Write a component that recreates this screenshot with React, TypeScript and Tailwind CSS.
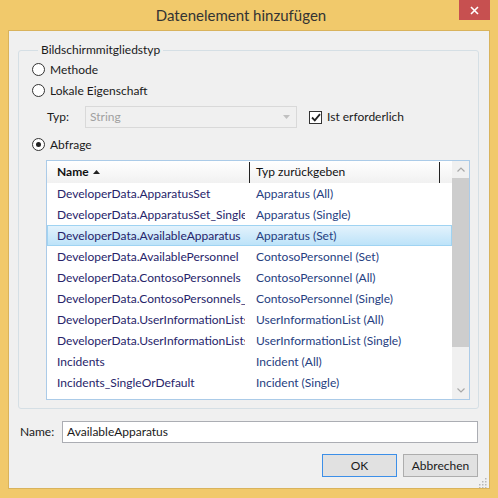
const rows = [
  ["DeveloperData.ApparatusSet", "Apparatus (All)"],
  ["DeveloperData.ApparatusSet_Single", "Apparatus (Single)"],
  ["DeveloperData.AvailableApparatus", "Apparatus (Set)"],
  ["DeveloperData.AvailablePersonnel", "ContosoPersonnel (Set)"],
  ["DeveloperData.ContosoPersonnels", "ContosoPersonnel (All)"],
  ["DeveloperData.ContosoPersonnels_Single", "ContosoPersonnel (Single)"],
  ["DeveloperData.UserInformationLists", "UserInformationList (All)"],
  ["DeveloperData.UserInformationLists_Single", "UserInformationList (Single)"],
  ["Incidents", "Incident (All)"],
  ["Incidents_SingleOrDefault", "Incident (Single)"],
];

const Radio = ({ label, checked }: { label: string; checked?: boolean }) => (
  <div className="flex items-center h-[21px] gap-[5px]">
    <span className="w-[13px] h-[13px] rounded-full border border-[#333] bg-white flex items-center justify-center">
      {checked && <span className="w-[5px] h-[5px] rounded-full bg-[#222]" />}
    </span>
    <span>{label}</span>
  </div>
);

const App = () => {
  return (
    <div
      className="w-[498px] h-[498px] bg-[#f1c96b] flex flex-col text-[12px] text-[#1a1a1a]"
      style={{ fontFamily: "Lato, 'Noto Sans', sans-serif" }}
    >
      {/* title bar */}
      <div className="flex h-[30px] shrink-0">
        <div className="flex-1 pl-[23px] flex items-center justify-center text-[15px] text-[#333]">
          Datenelement hinzufügen
        </div>
        <div className="w-[31px] h-[20px] bg-[#c75050] flex items-center justify-center mr-[8px]">
          <svg width="9" height="9" viewBox="0 0 9 9">
            <path d="M1 1L8 8M8 1L1 8" stroke="white" strokeWidth="1.6" />
          </svg>
        </div>
      </div>

      {/* client area */}
      <div className="mx-[8px] mb-[9px] flex-1 bg-[#f0f0f0] border border-[#d9b35c] pl-[9px] pr-[10px] flex flex-col">
        <fieldset className="mt-[11px] border border-[#d5dfe5] rounded-[3px] pl-[13px] pr-[8px] pb-[8px] pt-[1px]">
          <legend className="ml-[6px] px-[3px] leading-[16px] text-[#1a1a1a]">
            Bildschirmmitgliedstyp
          </legend>
          <Radio label="Methode" />
          <Radio label="Lokale Eigenschaft" />
          <div className="flex items-center h-[22px] mt-[5px]">
            <span className="pl-[15px] w-[53px]">Typ:</span>
            <div className="w-[212px] h-[22px] border border-[#d9d9d9] bg-[#f0f0f0] flex items-center justify-between pl-[4px] pr-[6px] text-[#a0a0a0]">
              <span>String</span>
              <svg width="7" height="4" viewBox="0 0 7 4">
                <path d="M0 0H7L3.5 4Z" fill="#c0c0c0" />
              </svg>
            </div>
            <span className="ml-[12px] w-[13px] h-[13px] border border-[#333] bg-white flex items-center justify-center">
              <svg width="10" height="9" viewBox="0 0 10 9">
                <path d="M1 4.5L3.8 7.3L9 1.2" stroke="#222" strokeWidth="1.8" fill="none" />
              </svg>
            </span>
            <span className="ml-[5px]">Ist erforderlich</span>
          </div>
          <div className="mt-[6px]">
            <Radio label="Abfrage" checked />
          </div>

          {/* list */}
          <div className="mt-[5px] ml-[14px] h-[240px] border border-[#abcbe8] bg-white flex">
            <div className="flex-1 flex flex-col">
              <div className="h-[22px] flex items-center bg-gradient-to-b from-white to-[#f1f1f1] text-[#111]">
                <div className="w-[202px] shrink-0 pl-[10px] flex items-center gap-[4px] font-bold">
                  Name
                  <svg width="7" height="4" viewBox="0 0 7 4">
                    <path d="M3.5 0L7 4H0Z" fill="#222" />
                  </svg>
                </div>
                <div className="w-[1px] h-[21px] bg-[#222]" />
                <div className="w-[189px] shrink-0 pl-[6px]">Typ zurückgeben</div>
                <div className="w-[1px] h-[21px] bg-[#222]" />
              </div>
              {rows.map(([name, type], i) => (
                <div
                  key={name}
                  className={`h-[21px] flex items-center border ${
                    i === 2
                      ? "bg-gradient-to-b from-[#e3f2fc] to-[#bde3f9] border-[#9fd3f2]"
                      : "border-transparent"
                  }`}
                >
                  <div className="w-[201px] shrink-0 pl-[9px]">
                    <div className="w-[188px] overflow-hidden whitespace-nowrap text-[#27246a]">
                      {name}
                    </div>
                  </div>
                  <div className="pl-[7px] whitespace-nowrap text-[#26407f]">{type}</div>
                </div>
              ))}
            </div>
            <div className="w-[17px] bg-[#f0f0f0] flex flex-col items-center">
              <div className="h-[17px] flex items-center justify-center">
                <svg width="8" height="5" viewBox="0 0 8 5">
                  <path d="M0.5 4.5L4 1L7.5 4.5" stroke="#a8a8a8" strokeWidth="1.2" fill="none" />
                </svg>
              </div>
              <div className="w-[17px] h-[169px] bg-[#cdcdcd]" />
              <div className="flex-1" />
              <div className="h-[17px] flex items-center justify-center">
                <svg width="8" height="5" viewBox="0 0 8 5">
                  <path d="M0.5 0.5L4 4L7.5 0.5" stroke="#a8a8a8" strokeWidth="1.2" fill="none" />
                </svg>
              </div>
            </div>
          </div>
        </fieldset>

        {/* name */}
        <div className="mt-[12px] flex items-center h-[22px]">
          <span className="pl-[2px] w-[44px]">Name:</span>
          <div className="flex-1 h-[22px] border border-[#abadb3] bg-white flex items-center pl-[4px] mr-[1px]">
            AvailableApparatus
          </div>
        </div>

        {/* buttons */}
        <div className="mt-[11px] flex justify-end gap-[6px] mr-[1px]">
          <button className="w-[75px] h-[23px] bg-[#e1e1e1] border border-[#3c8fe8]">OK</button>
          <button className="w-[75px] h-[23px] bg-[#e1e1e1] border border-[#adadad]">Abbrechen</button>
        </div>
        <div className="flex justify-end mr-[-8px] mt-[1px]">
          <svg width="10" height="10" viewBox="0 0 10 10">
            {[
              [8, 0], [8, 3], [5, 3], [8, 6], [5, 6], [2, 6], [8, 9], [5, 9], [2, 9],
            ].map(([x, y]) => (
              <rect key={`${x}-${y}`} x={x} y={y} width="1.5" height="1.5" fill="#b8b8b8" />
            ))}
          </svg>
        </div>
      </div>
    </div>
  );
};

export default App;
